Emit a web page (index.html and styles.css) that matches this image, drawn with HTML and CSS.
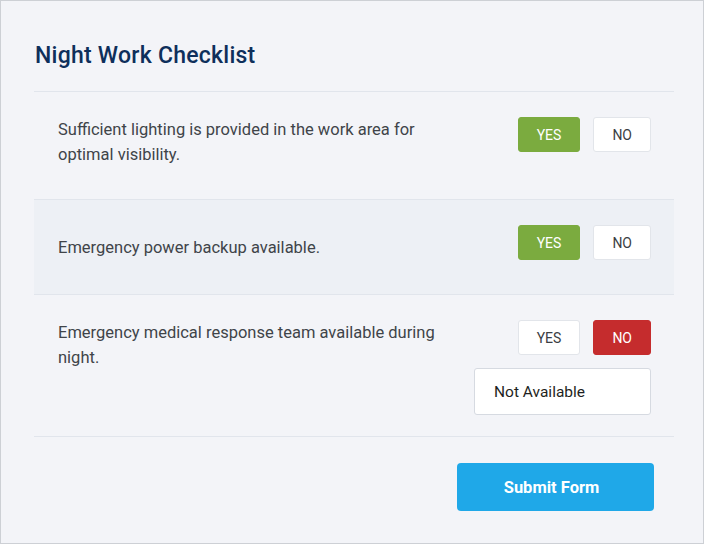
FILE: index.html
```html
<!DOCTYPE html>
<html lang="en">
<head>
<meta charset="utf-8">
<title>Night Work Checklist</title>
<link rel="stylesheet" href="styles.css">
</head>
<body>
<div class="page">
  <h1 class="title">Night Work Checklist</h1>

  <div class="row">
    <p class="question">Sufficient lighting is provided in the work area for optimal visibility.</p>
    <div class="answer">
      <div class="choices">
        <button class="choice choice--yes">YES</button>
        <button class="choice">NO</button>
      </div>
    </div>
  </div>

  <div class="row row--shaded row--single">
    <p class="question">Emergency power backup available.</p>
    <div class="answer">
      <div class="choices">
        <button class="choice choice--yes">YES</button>
        <button class="choice">NO</button>
      </div>
    </div>
  </div>

  <div class="row row--remark">
    <p class="question">Emergency medical response team available during night.</p>
    <div class="answer">
      <div class="choices">
        <button class="choice">YES</button>
        <button class="choice choice--no">NO</button>
      </div>
      <input class="remark" type="text" value="Not Available">
    </div>
  </div>

  <div class="actions">
    <button class="submit">Submit Form</button>
  </div>
</div>
</body>
</html>
```

FILE: styles.css
```css
* { box-sizing: border-box; }

html, body {
  margin: 0;
  padding: 0;
}

body {
  font-family: Roboto, "Liberation Sans", Arial, sans-serif;
  background: #f3f4f8;
}

.page {
  width: 704px;
  height: 544px;
  border: 1px solid #cdd0d5;
  background: #f3f4f8;
  padding: 0 29px 0 33px;
}

.title {
  margin: 0;
  padding: 41px 0 21px 1px;
  font-size: 23px;
  letter-spacing: 0.25px;
  line-height: 28px;
  font-weight: 500;
  color: #0e2f5b;
  border-bottom: 1px solid #e1e5ec;
}

.row {
  display: flex;
  justify-content: space-between;
  align-items: flex-start;
  gap: 24px;
  padding: 25px 23px 24px 24px;
  border-bottom: 1px solid #e1e5ec;
}

.row--shaded {
  background: #edf0f5;
}

.row--single {
  align-items: center;
}

.row--remark {
  padding-bottom: 11px;
}

.question {
  margin: 0 0 8px 0;
  max-width: 400px;
  font-size: 16.5px;
  line-height: 25px;
  color: #404449;
}

.row--single .question {
  margin: 0;
}

.answer {
  display: flex;
  flex-direction: column;
  align-items: flex-end;
  gap: 13px;
  padding-bottom: 10px;
}

.choices {
  display: flex;
  gap: 13px;
}

.choice {
  height: 35px;
  padding: 0 18px;
  font-family: Roboto, "Liberation Sans", Arial, sans-serif;
  font-size: 14px;
  color: #3b3e43;
  background: #ffffff;
  border: 1px solid #e2e5ea;
  border-radius: 3px;
}

.choice--yes {
  background: #7bab3f;
  border-color: #7bab3f;
  color: #ffffff;
}

.choice--no {
  background: #c52c2d;
  border-color: #c52c2d;
  color: #ffffff;
}

.remark {
  width: 177px;
  height: 47px;
  padding: 0 12px 0 19px;
  font-family: Roboto, "Liberation Sans", Arial, sans-serif;
  font-size: 15.5px;
  color: #1e1f22;
  background: #ffffff;
  border: 1px solid #d6dae1;
  border-radius: 3px;
}

.actions {
  display: flex;
  justify-content: flex-end;
  padding: 26px 20px 0 0;
}

.submit {
  width: 197px;
  height: 48px;
  padding: 0 8px 0 0;
  font-family: Roboto, "Liberation Sans", Arial, sans-serif;
  font-size: 16.5px;
  font-weight: 700;
  color: #ffffff;
  background: #1fa8e8;
  border: none;
  border-radius: 4px;
}
```
